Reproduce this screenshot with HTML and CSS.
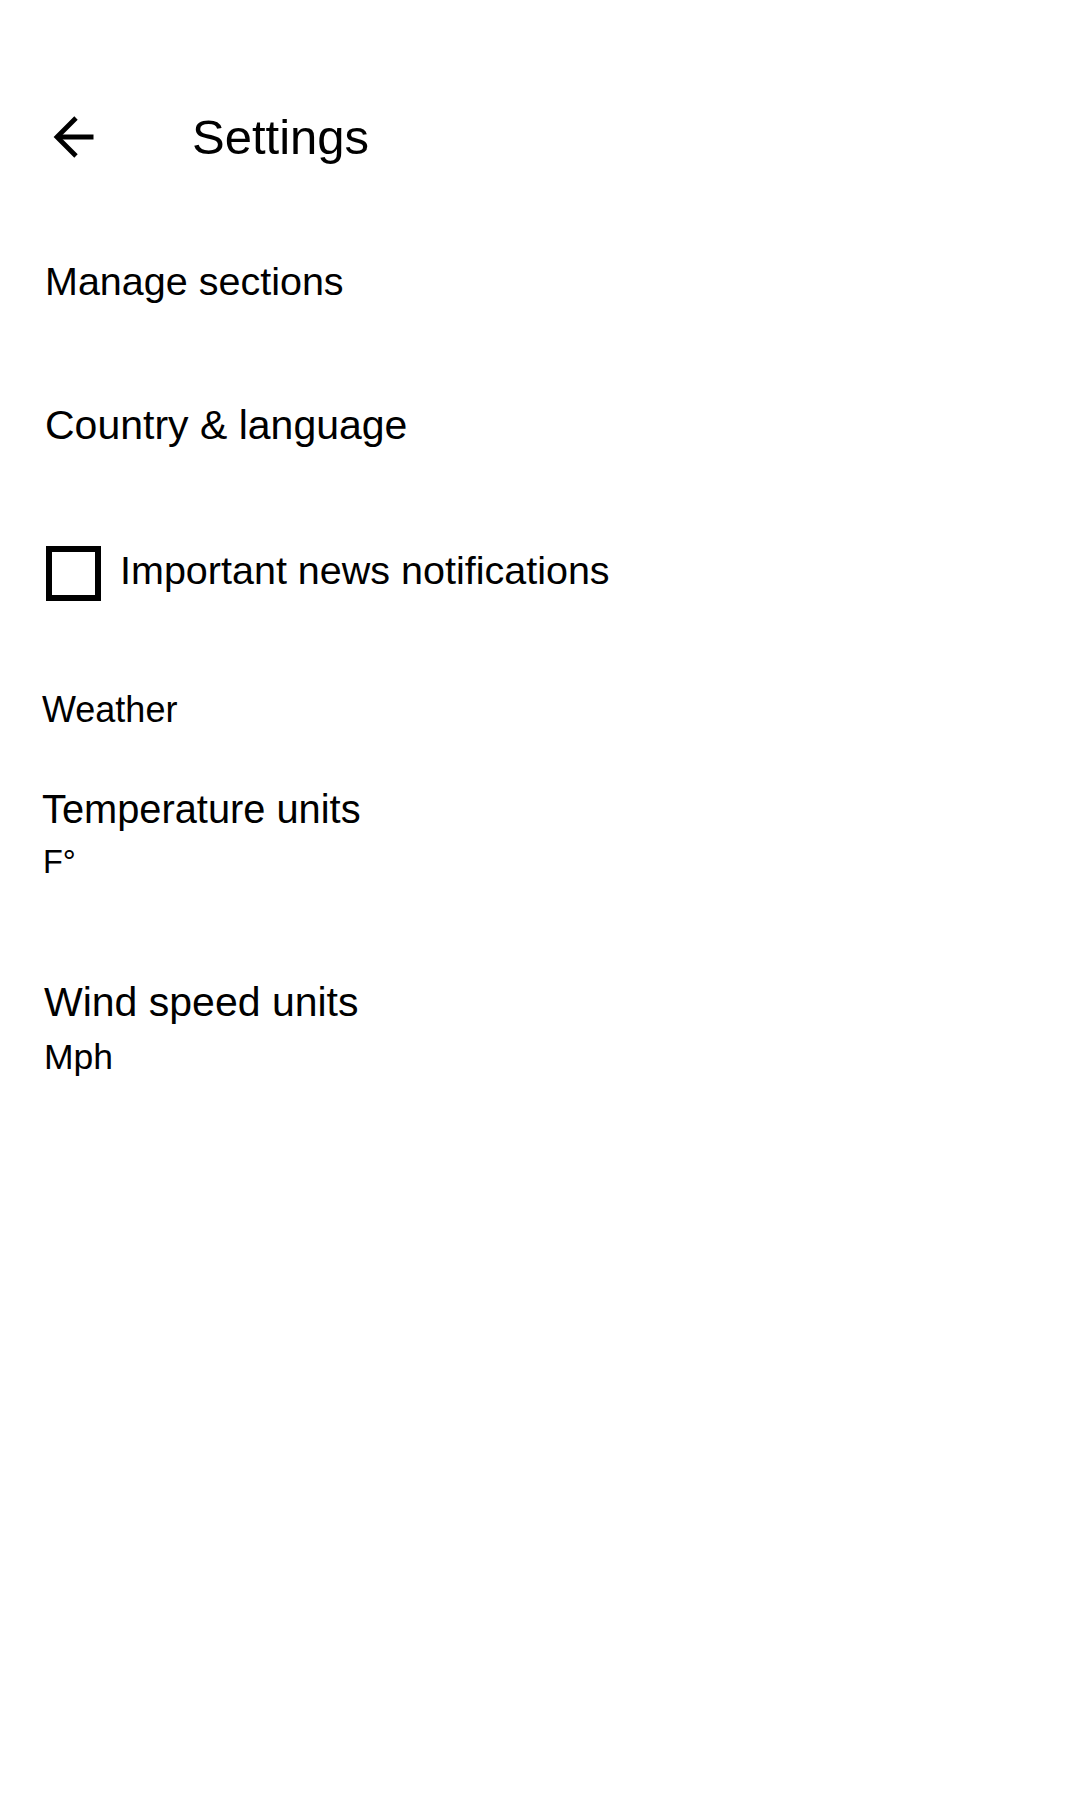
FILE: index.html
```html
<!DOCTYPE html>
<html lang="en">
<head>
<meta charset="utf-8">
<title>Settings</title>
<link rel="stylesheet" href="styles.css">
</head>
<body>
<div class="screen">
  <header class="appbar">
    <svg class="back" width="48" height="48" viewBox="0 0 48 48" aria-hidden="true">
      <polyline points="26,5 7,24 26,43" fill="none" stroke="#000" stroke-width="4.8" stroke-linejoin="miter"/>
      <line x1="7" y1="24" x2="43.5" y2="24" stroke="#000" stroke-width="4.8"/>
    </svg>
    <h1 class="title">Settings</h1>
  </header>

  <section class="general">
    <div class="item item-manage">Manage sections</div>
    <div class="item item-country">Country &amp; language</div>
    <label class="check-row">
      <span class="checkbox"></span>
      <span class="check-label">Important news notifications</span>
    </label>
  </section>

  <section class="weather">
    <div class="section-head">Weather</div>
    <div class="pref pref-temp">
      <div class="pref-title temp-title">Temperature units</div>
      <div class="pref-value temp-value">F°</div>
    </div>
    <div class="pref pref-wind">
      <div class="pref-title wind-title">Wind speed units</div>
      <div class="pref-value wind-value">Mph</div>
    </div>
  </section>
</div>
</body>
</html>
```

FILE: styles.css
```css
html, body {
  margin: 0;
  padding: 0;
  background: #fff;
}

body {
  font-family: "Liberation Sans", Arial, sans-serif;
  color: #000;
}

.screen {
  width: 1080px;
  min-height: 1800px;
}

.appbar {
  display: flex;
  align-items: flex-start;
  padding: 113px 0 0 50px;
}

.back {
  display: block;
  flex: none;
}

.title {
  margin: 0 0 0 94px;
  font-size: 49px;
  line-height: 49px;
  font-weight: normal;
}

.general {
  padding-left: 44px;
}

.item {
  font-size: 39.5px;
  line-height: 39.5px;
}

.item-manage {
  margin-top: 100px;
  padding-left: 1px;
}

.item-country {
  margin-top: 103.5px;
  font-size: 41px;
  line-height: 41px;
  padding-left: 1px;
}

.check-row {
  display: flex;
  align-items: flex-start;
  margin-top: 100px;
  padding-left: 2px;
}

.checkbox {
  box-sizing: border-box;
  width: 55px;
  height: 55px;
  border: 6px solid #000;
  flex: none;
}

.check-label {
  margin-top: 5px;
  margin-left: 19px;
  font-size: 39.5px;
  line-height: 39.5px;
}

.weather {
  padding-left: 42px;
}

.section-head {
  margin-top: 91px;
  font-size: 36px;
  line-height: 36px;
}

.pref-title {
  font-size: 39.8px;
  line-height: 39.8px;
}

.pref-value {
  font-size: 32.5px;
  line-height: 32.5px;
}

.pref-temp {
  margin-top: 62px;
}

.temp-value {
  margin-top: 16px;
  padding-left: 1px;
}

.pref-wind {
  margin-top: 103.5px;
  padding-left: 2px;
}

.wind-title {
  font-size: 41px;
  line-height: 41px;
}

.wind-value {
  margin-top: 17px;
  font-size: 35.5px;
  line-height: 35.5px;
}
```
